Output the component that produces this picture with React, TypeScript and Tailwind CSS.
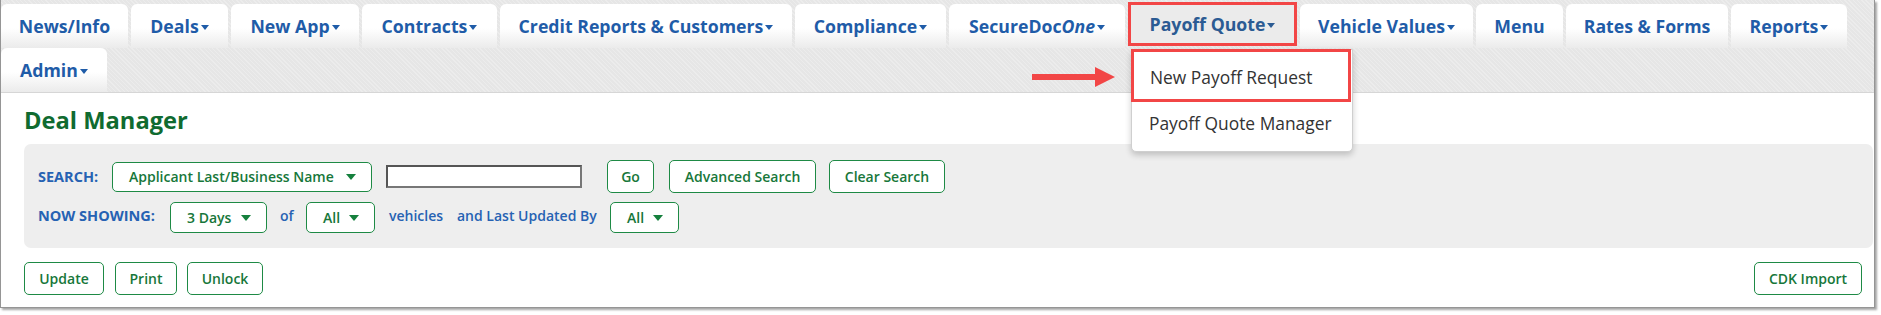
import React from "react";

const NAV = "#1f5ca8";

function Caret({ color = NAV }: { color?: string }) {
  return (
    <span
      className="inline-block w-0 h-0 border-x-[4px] border-x-transparent border-t-[5px] ml-[2px] mt-[2px]"
      style={{ borderTopColor: color }}
    />
  );
}

function Tab({ w, children, caret }: { w: number; children: React.ReactNode; caret?: boolean }) {
  return (
    <div
      className="h-[44px] shrink-0 rounded-t-[6px] flex items-center justify-center bg-[linear-gradient(to_bottom,#ffffff_55%,#ebebeb_100%)] text-[17.7px] font-bold text-[#1f5ca8]"
      style={{ width: w }}
    >
      <span>{children}</span>
      {caret && <Caret />}
    </div>
  );
}

function GreenCaret() {
  return <span className="inline-block w-0 h-0 border-x-[5px] border-x-transparent border-t-[6px] border-t-[#15803d]" />;
}

function Btn({ w, children, ml = 0 }: { w: number; children: React.ReactNode; ml?: number }) {
  return (
    <div
      className="h-[33px] shrink-0 rounded-[5px] border border-[#1e8a45] bg-white flex items-center justify-center text-[14px] font-semibold text-[#17773a]"
      style={{ width: w, marginLeft: ml }}
    >
      {children}
    </div>
  );
}

function Select({ w, children, ml = 0, h = 30 }: { w: number; children: React.ReactNode; ml?: number; h?: number }) {
  return (
    <div
      className="shrink-0 rounded-[5px] border border-[#1e8a45] bg-white flex items-center justify-between pl-[16px] pr-[15px] text-[14px] font-semibold text-[#17773a]"
      style={{ width: w, marginLeft: ml, height: h }}
    >
      <span>{children}</span>
      <GreenCaret />
    </div>
  );
}

export default function App() {
  return (
    <div className="w-[1881px] h-[315px] bg-white" style={{ fontFamily: '"Open Sans", "Liberation Sans", sans-serif' }}>
      <div className="relative w-[1875px] h-[308px] border-l border-r border-b border-[#959595] shadow-[2px_2px_2px_rgba(0,0,0,0.35)]">
        {/* nav */}
        <div className="h-[93px] border-b border-[#d6d6d6] bg-[#e6e6e6] bg-[repeating-linear-gradient(45deg,rgba(255,255,255,0.25)_0px,rgba(255,255,255,0.25)_1px,transparent_1px,transparent_3px)] pt-[4px]">
          <div className="flex gap-[3px] h-[44px]">
            <Tab w={127}>News/Info</Tab>
            <Tab w={97} caret>Deals</Tab>
            <Tab w={128} caret>New App</Tab>
            <Tab w={135} caret>Contracts</Tab>
            <Tab w={292} caret>Credit Reports &amp; Customers</Tab>
            <Tab w={151} caret>Compliance</Tab>
            <Tab w={176} caret>
              SecureDoc<i>One</i>
            </Tab>
            <div className="w-[169px] h-[44px] -mt-[2px] shrink-0 border-[3px] border-[#f24646] bg-[#ebebeb] flex items-center justify-center text-[17.7px] font-bold text-[#2b5b93]">
              <span>Payoff Quote</span>
              <Caret color="#2b5b93" />
            </div>
            <Tab w={173} caret>Vehicle Values</Tab>
            <Tab w={87}>Menu</Tab>
            <Tab w={162}>Rates &amp; Forms</Tab>
            <Tab w={116} caret>Reports</Tab>
          </div>
          <div className="flex h-[44px]">
            <Tab w={106} caret>Admin</Tab>
          </div>
        </div>

        {/* title */}
        <div className="ml-[23px] mt-[12px] h-[30px] leading-[30px] text-[23.7px] font-bold text-[#106b30]">Deal Manager</div>

        {/* search panel */}
        <div className="ml-[23px] mr-[1px] mt-[9px] h-[104px] rounded-[7px] bg-[#eeeeee] pl-[14px] pt-[16px]">
          <div className="flex items-center h-[33px]">
            <span className="w-[74px] shrink-0 text-[14.5px] font-bold text-[#2662b3]">SEARCH:</span>
            <Select w={260} h={30}>Applicant Last/Business Name</Select>
            <div className="ml-[14px] w-[196px] h-[23px] bg-white border-2 border-t-[#555] border-l-[#555] border-b-[#777] border-r-[#777]" />
            <Btn w={47} ml={25}>Go</Btn>
            <Btn w={147} ml={15}>Advanced Search</Btn>
            <Btn w={116} ml={13}>Clear Search</Btn>
          </div>
          <div className="flex items-center h-[31px] mt-[9px]">
            <span className="w-[132px] shrink-0 text-[14.5px] font-bold text-[#2662b3] -mt-[3px]">NOW SHOWING:</span>
            <Select w={97} h={31}>3 Days</Select>
            <span className="ml-[13px] w-[26px] shrink-0 text-[14px] font-semibold text-[#2662b3] -mt-[5px]">of</span>
            <Select w={69} h={31}>All</Select>
            <span className="ml-[14px] w-[68px] shrink-0 text-[14px] font-semibold text-[#2662b3] -mt-[5px]">vehicles</span>
            <span className="w-[153px] shrink-0 text-[14px] font-semibold text-[#2662b3] -mt-[5px]">and Last Updated By</span>
            <Select w={69} h={31}>All</Select>
          </div>
        </div>

        {/* bottom buttons */}
        <div className="flex items-center ml-[23px] mr-[12px] mt-[14px] h-[32px]">
          <Btn w={80}>Update</Btn>
          <Btn w={62} ml={11}>Print</Btn>
          <Btn w={76} ml={10}>Unlock</Btn>
          <div className="flex-1" />
          <Btn w={108}>CDK Import</Btn>
        </div>

        {/* red arrow */}
        <div className="absolute left-[1031px] top-[67px] flex items-center">
          <div className="w-[63px] h-[6px] bg-[#f24646]" />
          <div className="w-0 h-0 border-y-[10px] border-y-transparent border-l-[20px] border-l-[#f24646]" />
        </div>

        {/* dropdown menu */}
        <div className="absolute left-[1130px] top-[49px] w-[222px] h-[103px] bg-white border border-[#cfcfcf] rounded-b-[5px] shadow-[0_3px_6px_rgba(0,0,0,0.2)] text-[17.4px] text-[#333333]">
          <div className="h-[53px] -mt-[1px] -ml-[1px] w-[220px] border-[3px] border-[#f24646] flex items-center pl-[16px] pt-[4px]">
            New Payoff Request
          </div>
          <div className="h-[48px] flex items-center pl-[17px] pb-[5px]">Payoff Quote Manager</div>
        </div>
      </div>
    </div>
  );
}
